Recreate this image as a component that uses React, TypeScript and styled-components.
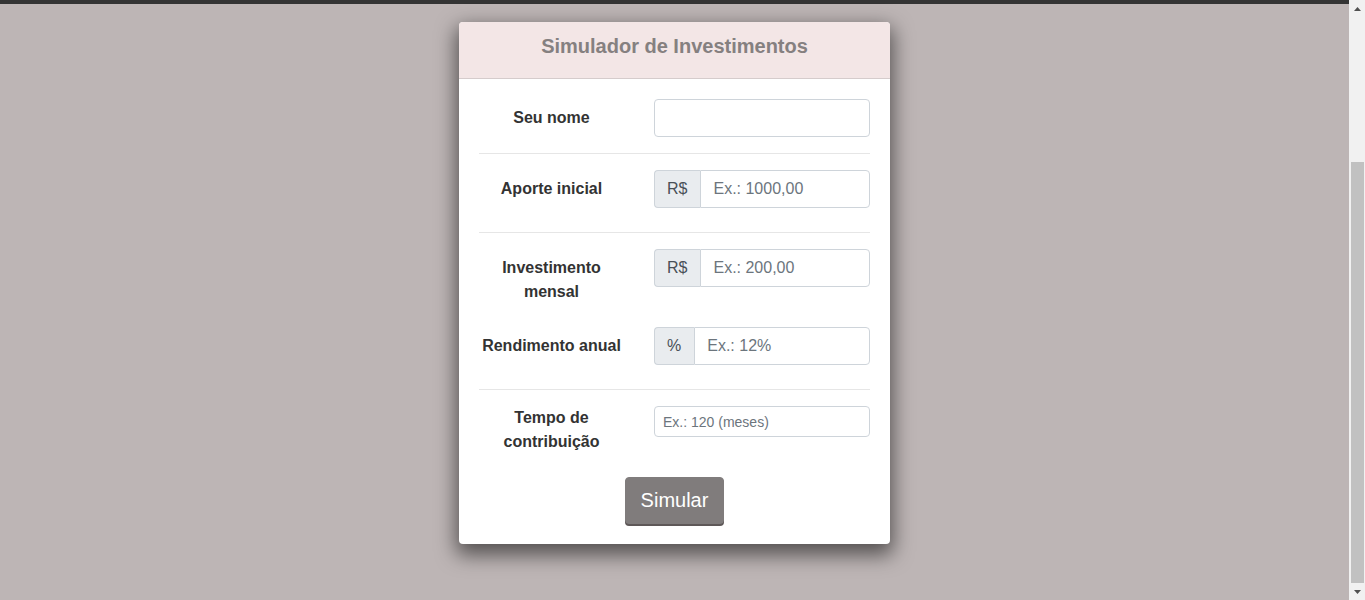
import React, { useLayoutEffect, useEffect } from "react";
import styled, { createGlobalStyle } from "styled-components";

const GlobalStyle = createGlobalStyle`
  html, body {
    margin: 0;
    padding: 0;
    background: #bdb5b5;
    font-family: "Liberation Sans", Arial, sans-serif;
  }
  * { box-sizing: border-box; }
`;

const TopBar = styled.header`
  height: 210px;
  background: #343434;
  margin-right: 16px;
`;

const Main = styled.main`
  display: flex;
  justify-content: center;
  padding: 18px 16px 56px 0;
`;

const Card = styled.section`
  width: 431px;
  background: #ffffff;
  border-radius: 4px;
  box-shadow: 0 8px 20px 3px rgba(0, 0, 0, 0.55);
  overflow: hidden;
`;

const CardHeader = styled.div`
  background: #f3e6e6;
  border-bottom: 1px solid #d5cccc;
  padding: 12px 20px 12px;
  text-align: center;
`;

const Title = styled.h4`
  margin: 0 0 8px;
  font-size: 20px;
  line-height: 24px;
  font-weight: 700;
  color: #858080;
`;

const CardBody = styled.div`
  padding: 20px;
`;

const Row = styled.div<{ $mb?: number }>`
  display: grid;
  grid-template-columns: 145px 1fr;
  column-gap: 30px;
  align-items: start;
  margin-bottom: ${(p) => p.$mb ?? 0}px;
`;

const Label = styled.label<{ $pad?: number }>`
  display: block;
  text-align: center;
  font-size: 16px;
  line-height: 24px;
  font-weight: 700;
  color: #333333;
  padding: ${(p) => p.$pad ?? 7}px 0;
`;

const Divider = styled.hr`
  margin: 16px 0;
  border: 0;
  border-top: 1px solid #e6e6e6;
  height: 0;
`;

const Input = styled.input<{ $small?: boolean }>`
  display: block;
  width: 100%;
  height: ${(p) => (p.$small ? 31 : 38)}px;
  padding: ${(p) => (p.$small ? "4px 8px" : "6px 12px")};
  font-family: "Liberation Sans", Arial, sans-serif;
  font-size: ${(p) => (p.$small ? 14 : 16)}px;
  line-height: 1.5;
  color: #495057;
  background: #fff;
  border: 1px solid #ced4da;
  border-radius: 4px;
  outline: none;
  &::placeholder {
    color: #6c757d;
    opacity: 1;
  }
`;

const InputGroup = styled.div`
  display: flex;
  align-items: stretch;
  margin-bottom: 8px;
  ${Input} {
    flex: 1;
    min-width: 0;
    border-top-left-radius: 0;
    border-bottom-left-radius: 0;
  }
`;

const Addon = styled.span`
  display: flex;
  align-items: center;
  padding: 6px 13px 6px 12px;
  font-size: 16px;
  line-height: 24px;
  color: #495057;
  background: #e9ecef;
  border: 1px solid #ced4da;
  border-right: 0;
  border-radius: 4px 0 0 4px;
`;

const ButtonRow = styled.div`
  display: flex;
  justify-content: center;
`;

const Button = styled.button`
  font-family: "Liberation Sans", Arial, sans-serif;
  font-size: 20px;
  line-height: 30px;
  color: #ffffff;
  background: #807c7c;
  border: 1px solid #807c7c;
  border-radius: 4px;
  padding: 7px 15px 8px;
  box-shadow: 0 2px 0 #5e5858;
  cursor: pointer;
`;

/* drawing of the browser's vertical scrollbar, overlaying the right edge of the viewport */
const ScrollBar = styled.div`
  position: fixed;
  top: 0;
  right: 0;
  width: 16px;
  height: 100vh;
  background: #f1f1f1;
  display: grid;
  grid-template-rows: 17px 1fr 17px;
`;

const ScrollArrow = styled.div`
  display: flex;
  align-items: center;
  justify-content: center;
  padding-left: 1px;
`;

const ScrollTrack = styled.div`
  display: flex;
  flex-direction: column;
  padding: 145px 1px 0 2px;
`;

const ScrollThumb = styled.div`
  flex: 1;
  background: #c1c1c1;
`;

export default function App() {
  useLayoutEffect(() => {
    window.scrollTo(0, document.documentElement.scrollHeight);
  }, []);
  useEffect(() => {
    window.scrollTo(0, document.documentElement.scrollHeight);
    const t = setTimeout(() => window.scrollTo(0, document.documentElement.scrollHeight), 50);
    return () => clearTimeout(t);
  }, []);

  return (
    <>
      <GlobalStyle />
      <TopBar />
      <Main>
        <Card>
          <CardHeader>
            <Title>Simulador de Investimentos</Title>
          </CardHeader>
          <CardBody>
            <Row>
              <Label>Seu nome</Label>
              <Input type="text" />
            </Row>
            <Divider />
            <Row>
              <Label>Aporte inicial</Label>
              <InputGroup>
                <Addon>R$</Addon>
                <Input type="text" placeholder="Ex.: 1000,00" />
              </InputGroup>
            </Row>
            <Divider />
            <Row $mb={16}>
              <Label>Investimento mensal</Label>
              <InputGroup>
                <Addon>R$</Addon>
                <Input type="text" placeholder="Ex.: 200,00" />
              </InputGroup>
            </Row>
            <Row>
              <Label>Rendimento anual</Label>
              <InputGroup>
                <Addon>%</Addon>
                <Input type="text" placeholder="Ex.: 12%" />
              </InputGroup>
            </Row>
            <Divider />
            <Row $mb={23}>
              <Label $pad={0}>Tempo de contribuição</Label>
              <Input $small type="text" placeholder="Ex.: 120 (meses)" />
            </Row>
            <ButtonRow>
              <Button type="button">Simular</Button>
            </ButtonRow>
          </CardBody>
        </Card>
      </Main>
      <ScrollBar aria-hidden="true">
        <ScrollArrow>
          <svg width="7" height="4" viewBox="0 0 7 4">
            <path d="M3.5 0 L7 4 L0 4 Z" fill="#505050" />
          </svg>
        </ScrollArrow>
        <ScrollTrack>
          <ScrollThumb />
        </ScrollTrack>
        <ScrollArrow>
          <svg width="7" height="4" viewBox="0 0 7 4">
            <path d="M0 0 L7 0 L3.5 4 Z" fill="#505050" />
          </svg>
        </ScrollArrow>
      </ScrollBar>
    </>
  );
}
